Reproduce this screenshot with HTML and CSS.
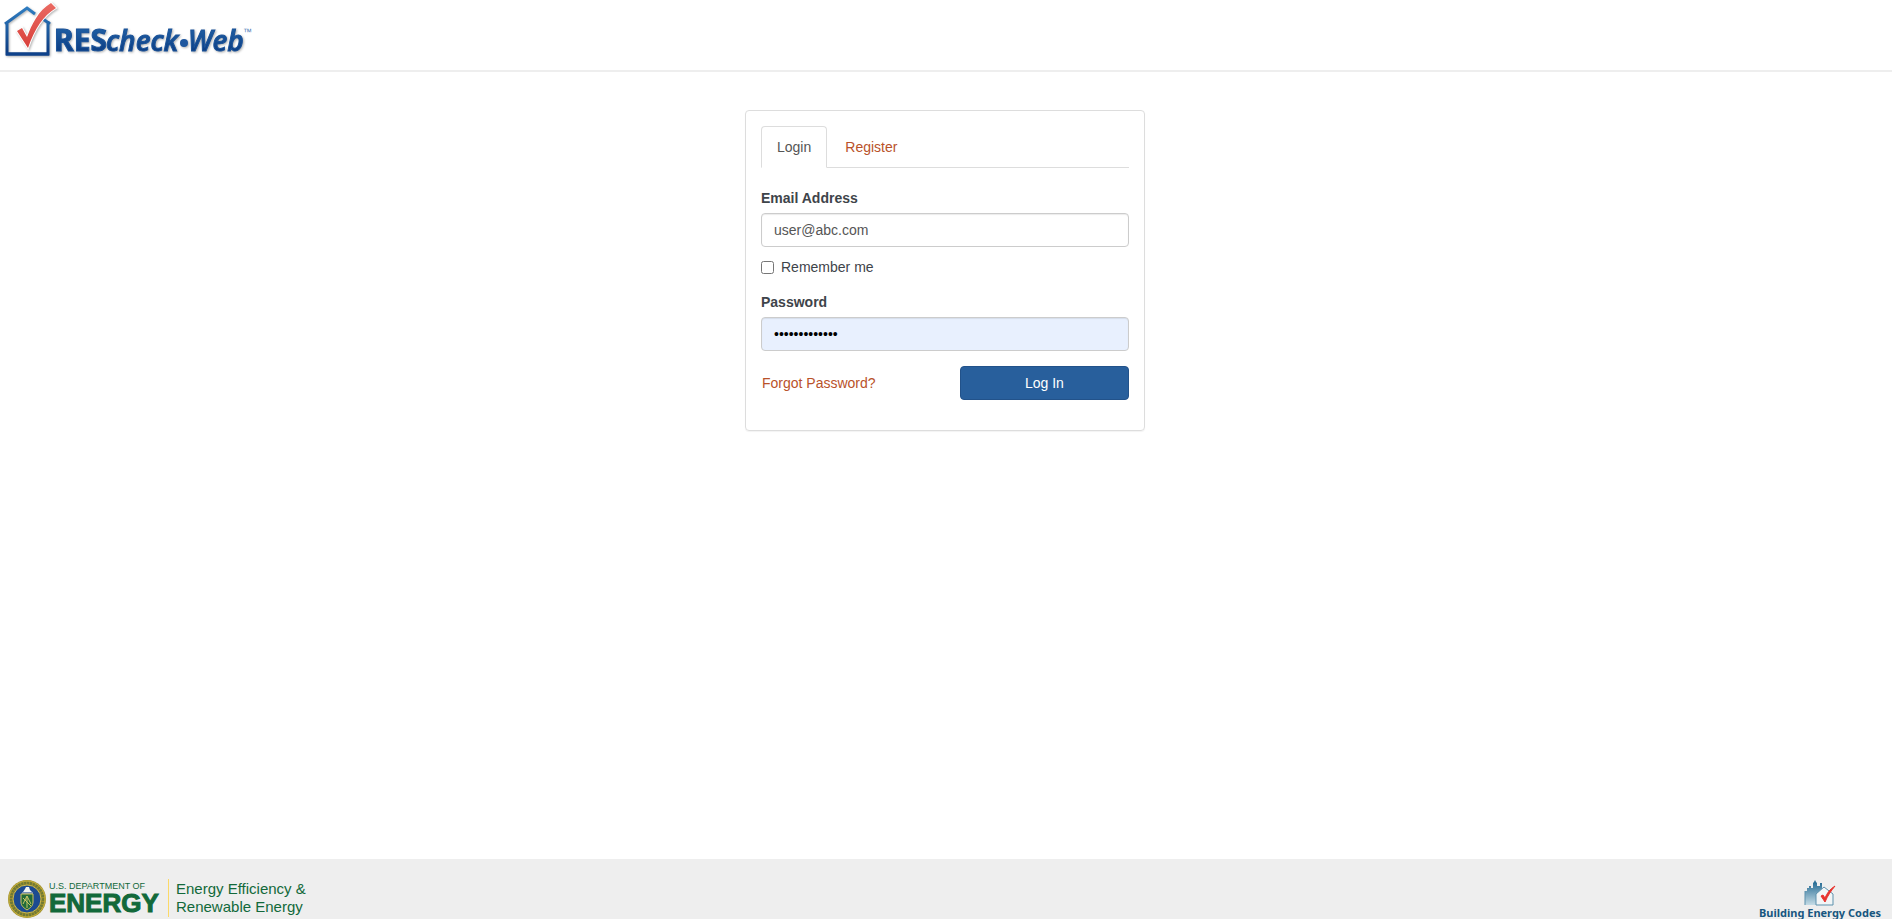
FILE: index.html
```
<!DOCTYPE html>
<html lang="en">
	<head>
		<meta charset="UTF-8" />
		<meta name="viewport" content="width=device-width, initial-scale=1.0" />
		<title>REScheck-Web</title>
		<link rel="stylesheet" href="styles.css">
	</head>
	<body>
		<header class="header">
			<a href="#" class="brand" aria-label="REScheck-Web">
				<svg width="260" height="60" viewBox="0 0 260 60">
					<defs>
						<linearGradient id="blue" gradientUnits="userSpaceOnUse" x1="0" y1="8" x2="0" y2="54">
							<stop offset="0" stop-color="#2f7cc0" />
							<stop offset="1" stop-color="#0b3a80" />
						</linearGradient>
						<linearGradient id="red" x1="0" y1="0" x2="0" y2="1">
							<stop offset="0" stop-color="#ea6a62" />
							<stop offset="1" stop-color="#d8403b" />
						</linearGradient>
					</defs>
					<g class="logo-shadow">
						<!-- house -->
						<path d="M35 14L27 8L5 24M7 22V54H48V21M43 19L50 24" fill="none" stroke="url(#blue)" stroke-width="3" />
						<path d="M6 54H49" fill="none" stroke="#0f428b" stroke-width="3" />
						<!-- check mark -->
						<path d="M17 31L22 28L27 37C32 24 38 11 51 3L56 8C43 16 35 28 28 48Z" fill="url(#red)" stroke="#ffffff" stroke-width="2" paint-order="stroke" />
						<text x="54" y="51" class="logo-text logo-res" fill="url(#blue)">RES</text>
						<text x="106" y="51" class="logo-text logo-check" fill="url(#blue)">check</text>
						<circle cx="184" cy="43" r="4" fill="#1e579f" />
						<text x="188" y="51" class="logo-text logo-check" fill="url(#blue)">Web</text>
					</g>
					<text x="243" y="35" class="logo-tm">™</text>
				</svg>
			</a>
		</header>

		<main class="main">
			<section class="panel">
				<nav class="tabs">
					<a href="#login" class="tab active">Login</a>
					<a href="#register" class="tab">Register</a>
				</nav>

				<form class="login-form">
					<label for="email" class="field-label">Email Address</label>
					<input type="email" id="email" class="form-control" value="user@abc.com" />

					<div class="remember">
						<input type="checkbox" id="remember" />
						<label for="remember">Remember me</label>
					</div>

					<label for="password" class="field-label">Password</label>
					<input type="password" id="password" class="form-control filled" value="abcdefghijklm" autocomplete="off" />

					<div class="actions">
						<a href="#forgot" class="forgot">Forgot Password?</a>
						<button type="button" class="btn-primary">Log In</button>
					</div>
				</form>
			</section>
		</main>

		<footer class="footer">
			<a href="#" class="doe" aria-label="U.S. Department of Energy">
				<svg class="seal" width="40" height="40" viewBox="0 0 40 40">
					<circle cx="20" cy="20" r="19" fill="#a08f2e" />
					<circle cx="20" cy="20" r="16" fill="none" stroke="#6f7a35" stroke-width="3" stroke-dasharray="2 1" />
					<circle cx="20" cy="20" r="18" fill="none" stroke="#c5b13d" stroke-width="1" />
					<circle cx="20" cy="20" r="14" fill="#1c4b91" stroke="#cdb94a" stroke-width="1" />
					<!-- eagle head -->
					<path d="M16 13L18 10L19 8H22L23 11L25 13Z" fill="#f2f4f2" />
					<path d="M15 14H26" stroke="#d0d7db" stroke-width="1" />
					<!-- shield -->
					<path d="M14 15H26V23C26 27 23 29 20 31C17 29 14 27 14 23Z" fill="#216b3a" stroke="#d2c35d" stroke-width="1" />
					<path d="M16 25L20 17L24 25M20 17V29M16 19L24 27" fill="none" stroke="#c9c466" stroke-width="1" />
				</svg>
				<span class="doe-name">
					<span class="doe-small">U.S. DEPARTMENT OF</span>
					<span class="doe-big">ENERGY</span>
				</span>
				<span class="doe-office">Energy Efficiency &amp;<br />Renewable Energy</span>
			</a>

			<a href="#" class="codes">
				<svg width="32" height="26" viewBox="0 0 32 26">
					<defs>
						<linearGradient id="city" x1="0" y1="0" x2="0" y2="1">
							<stop offset="0" stop-color="#17618c" />
							<stop offset="1" stop-color="#c5dce6" />
						</linearGradient>
					</defs>
					<path d="M1 25V11H3V8H5V6H7V8H9V3L10 2L11 0L12 2L13 3V6H16V3H18V10L12 15V25Z" fill="url(#city)" />
					<path d="M1 25V11" stroke="#5c91ad" stroke-width="1" fill="none" />
					<path d="M12 25V14L20 7L29 14V25Z" fill="#f2f5f6" stroke="#5c91ad" stroke-width="1" />
					<path d="M17 16L19 15L21 18C23 13 26 9 31 6C27 11 24 15 21 22Z" fill="#e8332e" stroke="#e8332e" stroke-width="1" />
				</svg>
				<span>Building Energy Codes</span>
			</a>
		</footer>
	</body>
</html>
```
FILE: styles.css
```
/* Base */
* {
	box-sizing: border-box;
}

body {
	margin: 0;
	min-height: 100vh;
	display: flex;
	flex-direction: column;
	font-family: "Liberation Sans", Arial, sans-serif;
	font-size: 14px;
	line-height: 20px;
	color: #3e444a;
	background-color: #ffffff;
}

a {
	color: #b9522a;
	text-decoration: none;
}

/* Header */
.header {
	height: 72px;
	border-bottom: 2px solid #eeeeee;
}

.brand {
	display: inline-block;
}

.brand svg {
	display: block;
}

.logo-shadow {
	filter: drop-shadow(1px 1px 1px rgba(0, 0, 0, 0.3));
}

.logo-text {
	font-size: 29px;
	font-weight: 700;
	stroke: #1a5299;
	stroke-width: 1px;
}

.logo-res {
	font-family: "Noto Sans", sans-serif;
	font-size: 30px;
}

.logo-check {
	font-family: "Open Sans", sans-serif;
	font-size: 28px;
	font-weight: 600;
	font-style: italic;
}

.logo-tm {
	font-size: 9px;
	fill: #4d80b8;
}

/* Login panel */
.main {
	flex: 1;
	padding: 38px 17px 38px 15px;
}

.panel {
	max-width: 400px;
	margin: 0 auto;
	padding: 15px 15px 30px;
	border: 1px solid #dddddd;
	border-radius: 4px;
	box-shadow: 0 1px 1px rgba(0, 0, 0, 0.05);
}

.tabs {
	display: flex;
	gap: 2px;
	border-bottom: 1px solid #dddddd;
}

.tab {
	margin-bottom: -1px;
	padding: 10px 15px;
	border: 1px solid transparent;
	border-radius: 4px 4px 0 0;
}

.tab.active {
	color: #555555;
	background-color: #ffffff;
	border-color: #dddddd;
	border-bottom-color: #ffffff;
}

.login-form {
	padding-top: 20px;
}

.field-label {
	display: block;
	margin-bottom: 5px;
	font-weight: bold;
}

.form-control {
	display: block;
	width: 100%;
	height: 34px;
	padding: 6px 12px;
	border: 1px solid #cccccc;
	border-radius: 4px;
	box-shadow: inset 0 1px 1px rgba(0, 0, 0, 0.08);
	font: inherit;
	color: #555555;
	background-color: #ffffff;
}

.form-control.filled {
	color: #000000;
	background-color: #e8f0fe;
}

.remember {
	display: flex;
	align-items: center;
	gap: 7px;
	margin: 10px 0 15px;
}

.remember input {
	width: 13px;
	height: 13px;
	margin: 0;
}

.actions {
	display: flex;
	align-items: center;
	justify-content: space-between;
	margin-top: 15px;
}

.forgot {
	padding-left: 1px;
}

.btn-primary {
	width: 46%;
	height: 34px;
	border: 1px solid #22528a;
	border-radius: 4px;
	font: inherit;
	color: #ffffff;
	background-color: #285f9c;
	cursor: pointer;
}

/* Footer */
.footer {
	display: flex;
	justify-content: space-between;
	height: 60px;
	padding: 20px 11px 0 7px;
	overflow: hidden;
	background-color: #eeeeee;
}

.doe {
	display: flex;
	align-items: flex-start;
	color: #12693a;
}

.doe-name {
	display: flex;
	flex-direction: column;
	width: 121px;
	padding: 3px 0 0 2px;
}

.doe-small {
	font-size: 9px;
	line-height: 8px;
	white-space: nowrap;
}

.doe-big {
	font-size: 26px;
	line-height: 26px;
	font-weight: bold;
	-webkit-text-stroke: 1px #12693a;
}

.doe-office {
	height: 38px;
	padding: 1px 0 0 7px;
	border-left: 1px solid #fbd968;
	font-size: 15px;
	line-height: 18px;
}

.codes {
	display: flex;
	flex-direction: column;
	align-items: center;
	padding-top: 1px;
	font-family: "Noto Sans", sans-serif;
	font-size: 11px;
	line-height: 14px;
	font-weight: 700;
	color: #17567f;
}

.codes svg {
	flex: none;
}
```
